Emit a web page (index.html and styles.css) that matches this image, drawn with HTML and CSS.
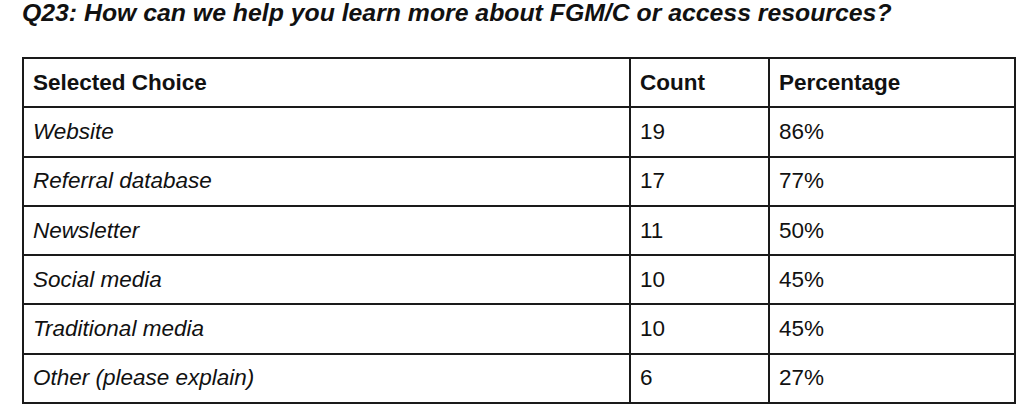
FILE: index.html
```html
<!DOCTYPE html>
<html>
<head>
<meta charset="utf-8">
<link rel="stylesheet" href="styles.css">
</head>
<body>
<div class="page">
  <h1 class="title">Q23: How can we help you learn more about FGM/C or access resources?</h1>
  <table class="data">
    <colgroup>
      <col class="c1"><col class="c2"><col class="c3">
    </colgroup>
    <thead>
      <tr><th>Selected Choice</th><th>Count</th><th>Percentage</th></tr>
    </thead>
    <tbody>
      <tr><td class="choice">Website</td><td>19</td><td>86%</td></tr>
      <tr><td class="choice">Referral database</td><td>17</td><td>77%</td></tr>
      <tr><td class="choice">Newsletter</td><td>11</td><td>50%</td></tr>
      <tr><td class="choice">Social media</td><td>10</td><td>45%</td></tr>
      <tr><td class="choice">Traditional media</td><td>10</td><td>45%</td></tr>
      <tr><td class="choice">Other (please explain)</td><td>6</td><td>27%</td></tr>
    </tbody>
  </table>
</div>
</body>
</html>
```
FILE: styles.css
```css
html, body {
  margin: 0;
  padding: 0;
  background: #fff;
}
body {
  font-family: "Liberation Sans", Arial, sans-serif;
  color: #111;
}
.page {
  padding: 0 10px 0 22px;
}
.title {
  margin: 0 0 31px 0;
  font-size: 24.8px;
  font-weight: bold;
  font-style: italic;
  line-height: 26px;
}
.data {
  border-collapse: collapse;
  width: 992px;
  table-layout: fixed;
}
.c1 { width: 607px; }
.c2 { width: 139px; }
.c3 { width: 246px; }
.data th, .data td {
  border: 2px solid #1a1a1a;
  text-align: left;
  padding: 0 9px;
  height: 47.3px;
  font-size: 22.5px;
  vertical-align: middle;
}
.data th {
  font-weight: bold;
}
.data td.choice {
  font-style: italic;
}
```
